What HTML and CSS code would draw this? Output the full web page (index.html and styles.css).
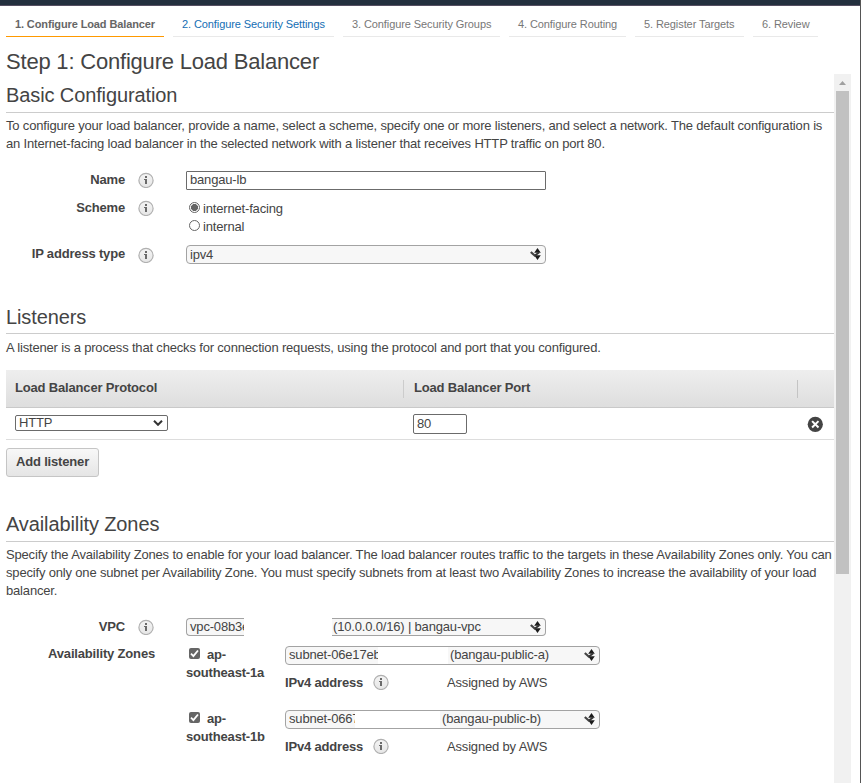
FILE: index.html
```html
<!DOCTYPE html>
<html lang="en">
<head>
<meta charset="utf-8">
<title>Configure Load Balancer</title>
<link rel="stylesheet" href="styles.css">
</head>
<body>
<svg class="defs" width="0" height="0">
  <defs>
    <linearGradient id="badge" x1="0" y1="0" x2="0" y2="1"><stop offset="0" stop-color="#f4f4f4"/><stop offset="1" stop-color="#e6e6e6"/></linearGradient>
    <symbol id="info" viewBox="0 0 16 16"><circle cx="8" cy="8.400" r="7.100" fill="url(#badge)" stroke="#b0b0b0" stroke-width="1.200"/><path d="M7 4h2v2H7zM6 7H9v5H7V8H6z" fill="#6a6a6a"/></symbol>
    <symbol id="sorter" viewBox="0 0 11 12"><path d="M7.500 0l3.300 4.700H4.200zM7.500 12l-3.300-4.700h6.600z" fill="#1c1c1c"/><path d="M.8 4l4.700 4.300" stroke="#444" stroke-width="2.200" fill="none"/><path d="M5 7.500L9 4.500" stroke="#333" stroke-width="1.800"/></symbol>
  </defs>
</svg>
<div class="topbar"></div>
<nav class="tabs">
  <span class="tab active t1">1. Configure Load Balancer</span>
  <span class="tab link t2">2. Configure Security Settings</span>
  <span class="tab t3">3. Configure Security Groups</span>
  <span class="tab t4">4. Configure Routing</span>
  <span class="tab t5">5. Register Targets</span>
  <span class="tab t6">6. Review</span>
</nav>
<h1><span>Step 1: Configure Load Balancer</span></h1>
<div class="pane">
  <main>
    <section class="basic">
      <h2>Basic Configuration</h2>
      <p>To configure your load balancer, provide a name, select a scheme, specify one or more listeners, and select a network. The default configuration is<br>an Internet-facing load balancer in the selected network with a listener that receives HTTP traffic on port 80.</p>
      <div class="row name-row"><label>Name</label><svg class="info"><use href="#info"/></svg><div class="field">bangau-lb</div></div>
      <div class="row scheme-row"><label>Scheme</label><svg class="info"><use href="#info"/></svg>
        <div class="radios"><div><i class="radio on"></i>internet-facing</div><div><i class="radio"></i>internal</div></div></div>
      <div class="row ip-row"><label>IP address type</label><svg class="info"><use href="#info"/></svg><div class="select">ipv4<svg class="sorter"><use href="#sorter"/></svg></div></div>
    </section>
    <section class="listeners">
      <h2>Listeners</h2>
      <p>A listener is a process that checks for connection requests, using the protocol and port that you configured.</p>
      <div class="thead"><b class="c1">Load Balancer Protocol</b><b class="c2">Load Balancer Port</b><b class="c3"></b></div>
      <div class="trow">
        <div class="c1"><div class="native">HTTP<svg width="10" height="6" viewBox="0 0 10 6"><path d="M1 .8l4 4 4-4" fill="none" stroke="#333" stroke-width="2"/></svg></div></div>
        <div class="c2"><div class="port">80</div></div>
        <svg class="remove" width="16" height="16" viewBox="0 0 16 16"><circle cx="8.300" cy="8.300" r="7.600" fill="#444"/><path d="M5.100 5.100l6.400 6.400M11.500 5.100l-6.400 6.400" stroke="#fff" stroke-width="2"/></svg>
      </div>
      <div class="button">Add listener</div>
    </section>
    <section class="zones">
      <h2>Availability Zones</h2>
      <p>Specify the Availability Zones to enable for your load balancer. The load balancer routes traffic to the targets in these Availability Zones only. You can<br>specify only one subnet per Availability Zone. You must specify subnets from at least two Availability Zones to increase the availability of your load<br>balancer.</p>
      <div class="row vpc-row"><label>VPC</label><svg class="info"><use href="#info"/></svg>
        <div class="split"><div class="select part-left"><span>vpc-08b3e</span></div><div class="select part-right">(10.0.0.0/16) | bangau-vpc<svg class="sorter"><use href="#sorter"/></svg></div></div></div>
      <div class="zone">
        <div class="zone-label">Availability Zones</div>
        <div class="zone-name"><i class="check"><svg viewBox="0 0 11 11"><path d="M2 5.700l2.400 2.400L9 2.500" fill="none" stroke="#fff" stroke-width="1.800"/></svg></i>ap-<br>southeast-1a</div>
        <div class="zone-data">
          <div class="select"><span class="id ida">subnet-06e17eb</span><span class="blank blank-a"></span><span class="tag">(bangau-public-a)</span><svg class="sorter"><use href="#sorter"/></svg></div>
          <div class="addr"><b>IPv4 address</b><svg class="info"><use href="#info"/></svg><span>Assigned by AWS</span></div>
        </div>
      </div>
      <div class="zone">
        <div class="zone-label"></div>
        <div class="zone-name"><i class="check"><svg viewBox="0 0 11 11"><path d="M2 5.700l2.400 2.400L9 2.500" fill="none" stroke="#fff" stroke-width="1.800"/></svg></i>ap-<br>southeast-1b</div>
        <div class="zone-data">
          <div class="select"><span class="id idb">subnet-0667</span><span class="blank blank-b"></span><span class="tag">(bangau-public-b)</span><svg class="sorter"><use href="#sorter"/></svg></div>
          <div class="addr"><b>IPv4 address</b><svg class="info"><use href="#info"/></svg><span>Assigned by AWS</span></div>
        </div>
      </div>
    </section>
  </main>
  <div class="scrollbar"><svg width="17" height="17" viewBox="0 0 17 17"><path d="M5 11l3.500-4 3.500 4z" fill="#a0a0a0"/></svg><div class="thumb"></div></div>
</div>
</body>
</html>
```
FILE: styles.css
```css
* { box-sizing: border-box; }
html, body { height: 783px; overflow: hidden; }
body { margin: 0; width: 861px; background: #fff; border-right: 1px solid #555; color: #444; font: 13px/18px "Liberation Sans", Arial, sans-serif; letter-spacing: -0.173px; }
.defs { display: block; height: 0; }
.topbar { height: 6px; background: #232f3e; border-bottom: 1px solid #554e61; }
.tabs { display: flex; gap: 9px; height: 31px; padding-left: 6px; font-size: 11px; letter-spacing: -0.09px; color: #777; }
.tab { height: 31px; padding: 9px 0 0 9px; border-bottom: 1px solid #e9e9e9; white-space: nowrap; }
.t1 { width: 158px; } .t2 { width: 161px; } .t3 { width: 157px; } .t4 { width: 117px; } .t5 { width: 109px; } .t6 { width: 65px; }
.tab.active { font-weight: bold; color: #666; border-color: #ff9900; letter-spacing: -0.12px; }
.tab.link { color: #146eb4; }
h1 { margin: 0; height: 37px; padding: 11px 0 0 6px; font-size: 22px; line-height: 28px; font-weight: normal; letter-spacing: -0.2px; white-space: nowrap; }
h2 { margin: 0; height: 39px; padding-top: 4px; font-size: 20px; line-height: 34px; font-weight: normal; letter-spacing: -0.11px; border-bottom: 1px solid #ccc; }
.pane { display: flex; height: 709px; padding-left: 6px; }
main { width: 828px; }
p { margin: 0; padding-top: 4px; white-space: nowrap; }
.basic { height: 221px; }
.listeners { height: 208px; }
.listeners h2 { padding-top: 5px; line-height: 34px; }
.listeners p { padding-top: 5px; }
.row { display: flex; align-items: flex-start; }
.row label { width: 119px; text-align: right; font-weight: bold; }
.info { width: 16px; height: 16px; margin: 1px 32px 0 13px; flex: none; }
.name-row { margin-top: 18px; }
.scheme-row { height: 46px; margin-top: 9px; }
.ip-row { height: 19px; }
.ip-row .info { margin-top: 2px; }
.field { width: 360px; height: 19px; border: 1px solid #6b6b6b; border-radius: 1px; padding-left: 3px; line-height: 16px; }
.radios { padding-top: 1px; }
.radios div { display: flex; padding-left: 3px; }
.radio { width: 11px; height: 11px; border: 1px solid #666; border-radius: 50%; margin: 2px 3px 0 0; background: #fff; }
.radio.on { background: radial-gradient(circle, #666 3.2px, #fff 3.8px); }
.select { display: flex; width: 360px; height: 19px; border: 1px solid #a3a3a3; border-radius: 4px; background: #f7f7f7; padding: 0 4px 0 3px; line-height: 17px; white-space: nowrap; }
.sorter { width: 11px; height: 12px; margin: 2px 0 0 auto; flex: none; }
.thead { display: flex; height: 38px; margin-top: 13px; padding: 10px 0 0 9px; border-bottom: 1px solid #c9c9c9; background: linear-gradient(#eee, #dedede); line-height: 16px; }
.thead b { height: 18px; }
.thead .c1 { width: 388px; }
.thead .c2 { width: 394px; padding-left: 10px; border-left: 1px solid #ccc; }
.thead .c3 { border-left: 1px solid #c4c4c4; }
.trow { display: flex; height: 32px; border-bottom: 1px solid #ddd; padding-left: 9px; }
.trow .c1 { width: 398px; padding-top: 7px; }
.trow .c2 { width: 394px; padding-top: 6px; }
.native { display: flex; align-items: center; justify-content: space-between; width: 153px; height: 16px; border: 1px solid #6b6b6b; border-radius: 2px; padding: 0 4px 0 3px; line-height: 14px; }
.port { width: 54px; height: 20px; border: 1px solid #6b6b6b; border-radius: 2px; padding-left: 3px; line-height: 18px; }
.remove { margin-top: 8px; }
.button { width: 93px; height: 29px; margin-top: 8px; border: 1px solid #c5c5c5; border-radius: 3px; background: linear-gradient(#f8f8f8, #e5e5e5); font-weight: bold; text-align: center; line-height: 26px; }
.vpc-row { height: 18px; margin-top: 18px; }
.vpc-row .select { height: 18px; line-height: 16px; }
.split { display: flex; gap: 88px; }
.vpc-row .part-left { width: 58px; border-right: 0; border-radius: 4px 0 0 4px; padding-right: 0; overflow: hidden; }
.vpc-row .part-right { width: 214px; border-left: 0; border-radius: 0 4px 4px 0; padding-left: 1px; }
.zone { display: flex; height: 64px; padding-top: 10px; }
.vpc-row + .zone .zone-label { margin-top: -1px; }
.zone-label { width: 149px; margin-right: 31px; text-align: right; font-weight: bold; }
.zone-name { width: 99px; font-weight: bold; }
.check { display: inline-block; width: 11px; height: 11px; margin: 0 7px 0 3px; border-radius: 2px; background: #666; vertical-align: 0; }
.check svg { display: block; width: 11px; height: 11px; }
.zone-data .select { width: 315px; line-height: 16px; }
.id { flex: none; overflow: hidden; }
.ida { width: 89px; }
.idb { width: 66px; }
.blank { background: #fff; flex: none; }
.blank-a { width: 70px; }
.blank-b { width: 85px; }
.tag { padding-left: 2px; }
.addr { display: flex; padding-top: 9px; white-space: nowrap; }
.addr b { width: 78px; }
.addr .info { margin: 0 58px 0 10px; }
.scrollbar { width: 17px; background: #f1f1f1; }
.scrollbar svg { display: block; }
.thumb { width: 13px; height: 483px; margin-left: 2px; background: #c1c1c1; }
```
